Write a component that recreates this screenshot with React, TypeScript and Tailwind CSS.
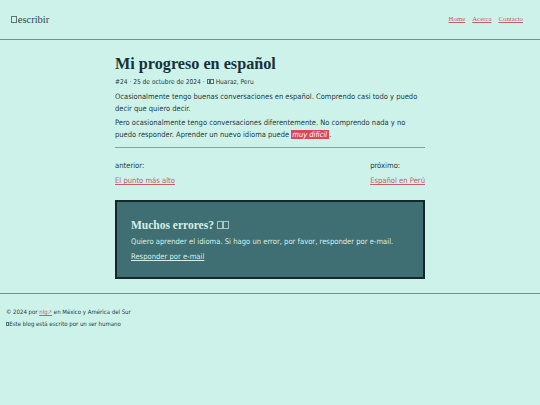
import React from 'react';

const Tofu: React.FC<{ className?: string }> = ({ className = '' }) => (
  <span className={`inline-block w-[0.55em] h-[0.75em] border border-current align-[-0.05em] opacity-70 ${className}`} />
);

const App: React.FC = () => {
  return (
    <div className="min-h-[405px] bg-[#cdf2ea] text-[#1d3b40] font-['DejaVu_Sans_Condensed','DejaVu_Sans',sans-serif] [font-stretch:condensed]">
      {/* Header */}
      <header className="h-[40px] pl-[11px] pr-[17px] flex justify-between items-center border-b border-[#7f8d89]">
        <div className="font-['Liberation_Serif',serif] [font-stretch:normal] text-[10.5px] text-[#2b4548] flex items-center">
          <Tofu className="mr-[1px]" />escribir
        </div>
        <nav className="flex gap-[7px] font-['Liberation_Serif',serif] [font-stretch:normal] text-[6.8px] text-[#c0606c]">
          <a className="underline" href="#">Home</a>
          <a className="underline" href="#">Acerca</a>
          <a className="underline" href="#">Contacto</a>
        </nav>
      </header>

      {/* Post */}
      <main className="w-[310px] mx-auto pt-[15px]">
        <h1 className="font-['Liberation_Serif',serif] [font-stretch:normal] font-bold text-[16.2px] leading-[19px] text-[#163238]">
          Mi progreso en español
        </h1>
        <p className="text-[6.6px] mt-[3px] leading-[10px]">
          #24 · 25 de octubre de 2024 · <Tofu /><Tofu /> Huaraz, Peru
        </p>
        <p className="text-[7.5px] leading-[11.5px] mt-[4px]">
          Ocasionalmente tengo buenas conversaciones en español. Comprendo casi todo y puedo decir que quiero decir.
        </p>
        <p className="text-[7.5px] leading-[11.5px] mt-[3px]">
          Pero ocasionalmente tengo conversaciones diferentemente. No comprendo nada y no puedo responder. Aprender un nuevo idioma puede{' '}
          <em className="bg-[#d9475e] text-white pl-[1px] pr-[2px]">muy difícil</em>.
        </p>
        <hr className="mt-[7px] border-t border-[#8f9e9a]" />

        <div className="flex justify-between mt-[12px] text-[7.6px]">
          <div className="flex flex-col gap-[4px]">
            <span>anterior:</span>
            <a className="underline text-[#c0606c]" href="#">El punto más alto</a>
          </div>
          <div className="flex flex-col gap-[4px] items-end">
            <span className="self-start">próximo:</span>
            <a className="underline text-[#c0606c]" href="#">Español en Perú</a>
          </div>
        </div>

        <section className="mt-[13px] h-[79px] bg-[#3f6f72] border-2 border-[#17262a] px-[14px] pt-[16px] text-[#d5efe9]">
          <h2 className="font-['Liberation_Serif',serif] [font-stretch:normal] font-bold text-[11.5px] leading-[14px]">
            Muchos errores? <Tofu /><Tofu />
          </h2>
          <p className="text-[7.6px] mt-[4px]">
            Quiero aprender el idioma. Si hago un error, por favor, responder por e-mail.
          </p>
          <a className="block underline text-[7.6px] mt-[4px]" href="#">Responder por e-mail</a>
        </section>
      </main>

      {/* Footer */}
      <footer className="mt-[14px] border-t border-[#7f8d89] px-[6px] pt-[12px] text-[6px] leading-[12px]">
        <p>
          © 2024 por <a className="underline text-[#c0606c]" href="#">nlg↗</a> en México y América del Sur
        </p>
        <p><Tofu />Este blog está escrito por un ser humano</p>
      </footer>
    </div>
  );
};

export default App;
